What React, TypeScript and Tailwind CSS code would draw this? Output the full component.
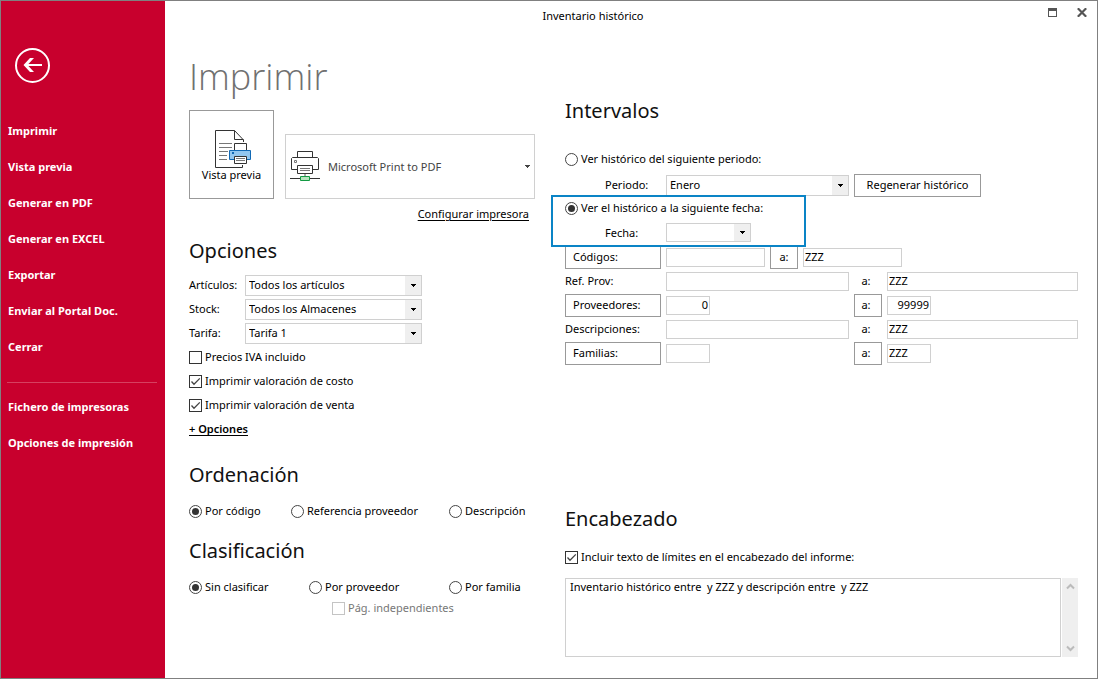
import React from 'react';

const mainLinks = ['Imprimir', 'Vista previa', 'Generar en PDF', 'Generar en EXCEL', 'Exportar', 'Enviar al Portal Doc.', 'Cerrar'];
const extraLinks = ['Fichero de impresoras', 'Opciones de impresión'];

const Heading = ({ children }: { children: React.ReactNode }) => (
  <h2 className="text-[20px] leading-7 text-[#111]">{children}</h2>
);

const Arrow = () => (
  <svg width="5" height="3" viewBox="0 0 5 3" shapeRendering="crispEdges">
    <path d="M0 0h5v1H0zM1 1h3v1H1zM2 2h1v1H2z" fill="currentColor" />
  </svg>
);

interface SelectProps {
  id: string;
  options: string[];
  className: string;
}

const Select = ({ id, options, className }: SelectProps) => (
  <div className={`relative ${className}`}>
    <select id={id} className="block h-full w-full appearance-none border border-[#d0d0d0] bg-white pr-5 pl-[3px] outline-none">
      {options.map((o) => (
        <option key={o}>{o}</option>
      ))}
    </select>
    <span className="pointer-events-none absolute inset-y-px right-px flex w-4 items-center justify-center bg-[#efefef]">
      <Arrow />
    </span>
  </div>
);

interface CheckProps {
  label: string;
  checked?: boolean;
  disabled?: boolean;
  className?: string;
}

const Checkbox = ({ label, checked, disabled, className = '' }: CheckProps) => (
  <label className={`flex items-center gap-[3px] ${disabled ? 'text-[#777]' : ''} ${className}`}>
    <span className="relative size-[13px] shrink-0">
      <input
        type="checkbox"
        defaultChecked={checked}
        disabled={disabled}
        className="peer block size-[13px] appearance-none border border-[#333] bg-white disabled:border-[#c4c4c4]"
      />
      <svg viewBox="0 0 13 13" className="pointer-events-none absolute inset-0 hidden size-[13px] peer-checked:block">
        <path d="M2.5 6.5L5 9.2L10.8 3.4" fill="none" stroke="#444" strokeWidth="1.3" />
      </svg>
    </span>
    {label}
  </label>
);

interface RadioProps {
  name: string;
  label: string;
  checked?: boolean;
}

const Radio = ({ name, label, checked }: RadioProps) => (
  <label className="flex items-center gap-[3px]">
    <input
      type="radio"
      name={name}
      defaultChecked={checked}
      className="grid size-[13px] shrink-0 appearance-none place-content-center rounded-full border border-[#444] bg-white before:size-[7px] before:rounded-full checked:before:bg-[#333]"
    />
    {label}
  </label>
);

const FrameButton = ({ children, className = '' }: { children: React.ReactNode; className?: string }) => (
  <button type="button" className={`h-[23px] shrink-0 border border-[#999] bg-white ${className}`}>
    {children}
  </button>
);

interface FieldProps {
  label: string;
  value?: string;
  className: string;
}

const Field = ({ label, value = '', className }: FieldProps) => (
  <input
    type="text"
    aria-label={label}
    defaultValue={value}
    className={`h-[19px] border border-[#d0d0d0] bg-white px-px pb-[2px] outline-none ${className}`}
  />
);

const PreviewIcon = () => (
  <svg width="37" height="39" viewBox="0 0 37 39" fill="none">
    <path d="M28.5 12V10L19.5 .5H.5V37.5H27.5V35" stroke="#333" />
    <path d="M19.5 .5V9.5H28.5" stroke="#333" />
    <path d="M4 13.5H17M4 17.5H17M4 21.5H13M4 25.5H12M4 29.5H12" stroke="#777" />
    <path d="M19.5 20V13.5H31.5V20" fill="#fff" stroke="#333" />
    <path d="M14.5 20.5H35.5V29.5H14.5Z" fill="#92c7f0" stroke="#1169b5" />
    <path d="M17 22H19V24H17Z" fill="#1169b5" />
    <path d="M19.5 26.5H31.5V33.5H19.5Z" fill="#fff" stroke="#333" />
    <path d="M21 28.5H30M21 30.5H30" stroke="#777" />
  </svg>
);

const PrinterIcon = () => (
  <svg width="30" height="31" viewBox="0 0 30 31" fill="none">
    <path d="M7.5 6V.5H22.5V6" stroke="#333" />
    <path d="M7.5 18.5H1.5V7.5L2.5 6.5H27.5L28.5 7.5V18.5H22.5" stroke="#333" />
    <path d="M4.5 9.5H6.5V11.5H4.5Z" stroke="#777" />
    <path d="M7.5 14.5H22.5V22.5H7.5Z" fill="#fff" stroke="#333" />
    <path d="M10 17.5H20M10 19.5H20" stroke="#777" />
    <path d="M15 23V26" stroke="#aaa" strokeWidth="2" />
    <path d="M0 27.5H30" stroke="#333" />
    <path d="M10.5 25.5H19.5V29.5H10.5Z" fill="#b5e3bd" stroke="#139a43" />
  </svg>
);

const Sidebar = () => (
  <aside className="w-[164px] shrink-0 bg-[#c8002d] pt-[47px] font-bold text-white">
    <button type="button" aria-label="Volver" className="ml-[14px] block">
      <svg width="35" height="35" viewBox="0 0 35 35" fill="none" stroke="#fff">
        <circle cx="17.5" cy="17.5" r="16.5" strokeWidth="2" />
        <path d="M27 17H11" strokeWidth="2" />
        <path d="M19 10H15L8.5 17L15 24H19L12.5 17Z" fill="#fff" stroke="none" />
      </svg>
    </button>
    <nav className="mt-[30px] flex flex-col">
      {mainLinks.map((l) => (
        <a key={l} href="#" className="flex h-9 items-center pl-[7px]">{l}</a>
      ))}
      <hr className="mr-2 ml-[6px] mt-[17px] mb-[6px] border-[#d64060]" />
      {extraLinks.map((l) => (
        <a key={l} href="#" className="flex h-9 items-center pl-[7px]">{l}</a>
      ))}
    </nav>
  </aside>
);

const optionRows = [
  { id: 'articulos', label: 'Artículos:', value: 'Todos los artículos' },
  { id: 'stock', label: 'Stock:', value: 'Todos los Almacenes' },
  { id: 'tarifa', label: 'Tarifa:', value: 'Tarifa 1' },
];

const LeftColumn = () => (
  <div className="w-[346px] shrink-0">
    <h1 className="pt-[22px] font-['Open_Sans','Noto_Sans',sans-serif] text-[36px] leading-[48px] font-light text-[#707070]">Imprimir</h1>
    <div className="mt-[9px] flex items-end justify-between">
      <button type="button" className="flex h-[89px] w-[85px] flex-col items-center border border-[#999] pt-[19px]">
        <span className="ml-1"><PreviewIcon /></span>
        <span className="leading-3">Vista previa</span>
      </button>
      <button type="button" className="flex h-[65px] w-[250px] items-center border border-[#d0d0d0] px-1 text-[#444]">
        <PrinterIcon />
        <span className="ml-2 flex-1 text-left">Microsoft Print to PDF</span>
        <Arrow />
      </button>
    </div>
    <div className="flex h-[30px] items-center justify-end pr-[6px]">
      <a href="#" className="underline underline-offset-2">Configurar impresora</a>
    </div>

    <section className="pt-2">
      <Heading>Opciones</Heading>
      <div className="mt-2 flex flex-col">
        {optionRows.map((r) => (
          <div key={r.id} className="flex h-6 items-center">
            <label htmlFor={r.id} className="w-14">{r.label}</label>
            <Select id={r.id} options={[r.value]} className="h-[21px] w-[177px]" />
          </div>
        ))}
        <Checkbox label="Precios IVA incluido" className="h-6" />
        <Checkbox label="Imprimir valoración de costo" checked className="h-6" />
        <Checkbox label="Imprimir valoración de venta" checked className="h-6" />
        <a href="#" className="flex h-6 items-center font-semibold">
          <span className="border-b border-black leading-3">+ Opciones</span>
        </a>
      </div>
    </section>

    <section className="mt-5">
      <Heading>Ordenación</Heading>
      <div className="mt-[10px] grid h-6 grid-cols-[102px_158px_auto] items-center">
        <Radio name="orden" label="Por código" checked />
        <Radio name="orden" label="Referencia proveedor" />
        <Radio name="orden" label="Descripción" />
      </div>
    </section>

    <section className="mt-[14px]">
      <Heading>Clasificación</Heading>
      <div className="mt-[10px] grid h-6 grid-cols-[120px_140px_auto] items-center">
        <Radio name="clasificacion" label="Sin clasificar" checked />
        <Radio name="clasificacion" label="Por proveedor" />
        <Radio name="clasificacion" label="Por familia" />
      </div>
      <Checkbox label="Pág. independientes" disabled className="ml-[143px] h-[18px]" />
    </section>
  </div>
);

const RightColumn = () => (
  <div className="flex min-w-0 flex-1 flex-col pt-[66px]">
    <Heading>Intervalos</Heading>
    <div className="mt-[22px] flex h-6 items-center">
      <Radio name="intervalo" label="Ver histórico del siguiente periodo:" />
    </div>
    <div className="flex h-[25px] items-center pt-[3px]">
      <label htmlFor="periodo" className="w-[101px] shrink-0 pl-[40px]">Periodo:</label>
      <Select id="periodo" options={['Enero']} className="h-[21px] w-[183px]" />
      <FrameButton className="ml-[5px] w-[127px]">Regenerar histórico</FrameButton>
    </div>
    <div className="relative">
      <div className="flex h-6 items-center">
        <Radio name="intervalo" label="Ver el histórico a la siguiente fecha:" checked />
      </div>
      <div className="flex h-[25px] items-center">
        <label htmlFor="fecha" className="w-[101px] shrink-0 pl-[40px]">Fecha:</label>
        <Select id="fecha" options={['']} className="h-[19px] w-[85px]" />
      </div>
      <div className="pointer-events-none absolute -top-px -bottom-[2px] -left-[14px] z-10 w-[255px] border-2 border-[#0a84c6]" />
    </div>

    <div className="flex h-6 items-center gap-[5px]">
      <FrameButton className="w-24 pl-[7px] text-left">Códigos:</FrameButton>
      <Field label="Código desde" className="w-[99px]" />
      <FrameButton className="w-7">a:</FrameButton>
      <Field label="Código hasta" value="ZZZ" className="w-[99px]" />
    </div>
    <div className="grid auto-rows-[24px] grid-cols-[96px_183px_28px_1fr] items-center gap-x-[5px]">
      <span>Ref. Prov:</span>
      <Field label="Ref. Prov desde" className="w-full" />
      <span className="pr-1 text-center">a:</span>
      <Field label="Ref. Prov hasta" value="ZZZ" className="w-full" />

      <FrameButton className="w-24 pl-[7px] text-left">Proveedores:</FrameButton>
      <Field label="Proveedor desde" value="0" className="w-11 text-right" />
      <FrameButton className="w-7 pr-1">a:</FrameButton>
      <Field label="Proveedor hasta" value="99999" className="w-11 text-right" />

      <span>Descripciones:</span>
      <Field label="Descripción desde" className="w-full" />
      <span className="pr-1 text-center">a:</span>
      <Field label="Descripción hasta" value="ZZZ" className="w-full" />

      <FrameButton className="w-24 pl-[7px] text-left">Familias:</FrameButton>
      <Field label="Familia desde" className="w-11" />
      <FrameButton className="w-7 pr-1">a:</FrameButton>
      <Field label="Familia hasta" value="ZZZ" className="w-11" />
    </div>

    <section className="mt-[140px]">
      <Heading>Encabezado</Heading>
      <Checkbox label="Incluir texto de límites en el encabezado del informe:" checked className="mt-3 h-6" />
      <div className="mt-[9px] flex h-[79px] gap-px">
        <textarea
          aria-label="Texto del encabezado"
          defaultValue="Inventario histórico entre  y ZZZ y descripción entre  y ZZZ"
          className="min-w-0 flex-1 resize-none border border-[#d0d0d0] px-1 leading-4 outline-none"
        />
        <div className="flex w-4 flex-col items-center justify-between bg-[#efefef] py-1 text-[#bbb]">
          <button type="button" aria-label="Subir">
            <svg width="9" height="9" viewBox="0 0 9 9" fill="none" stroke="currentColor" strokeWidth="2">
              <path d="M1 6.5L4.5 3L8 6.5" />
            </svg>
          </button>
          <button type="button" aria-label="Bajar">
            <svg width="9" height="9" viewBox="0 0 9 9" fill="none" stroke="currentColor" strokeWidth="2">
              <path d="M1 2.5L4.5 6L8 2.5" />
            </svg>
          </button>
        </div>
      </div>
    </section>
  </div>
);

const App: React.FC = () => {
  return (
    <div className="flex min-h-screen border border-[#808080] bg-white font-['Noto_Sans','Open_Sans',sans-serif] text-[11px] leading-4 text-black">
      <Sidebar />
      <div className="min-w-0 flex-1">
        <header className="flex h-[30px] items-start">
          <div className="flex-1 pt-[7px] text-center">Inventario histórico</div>
          <div className="flex w-[76px] justify-end gap-5 pt-[7px] pr-[10px] text-[#555]">
            <button type="button" aria-label="Maximizar">
              <svg width="9" height="9" viewBox="0 0 9 9" shapeRendering="crispEdges">
                <path d="M0 0H9V9H0ZM1 3V8H8V3Z" fill="currentColor" fillRule="evenodd" />
              </svg>
            </button>
            <button type="button" aria-label="Cerrar ventana">
              <svg width="10" height="9" viewBox="0 0 10 9" fill="none" stroke="currentColor" strokeWidth="2.2">
                <path d="M.8 .3L9.2 8.7M9.2 .3L.8 8.7" />
              </svg>
            </button>
          </div>
        </header>
        <main className="flex gap-[30px] pr-[19px] pl-6">
          <LeftColumn />
          <RightColumn />
        </main>
      </div>
    </div>
  );
};

export default App;
